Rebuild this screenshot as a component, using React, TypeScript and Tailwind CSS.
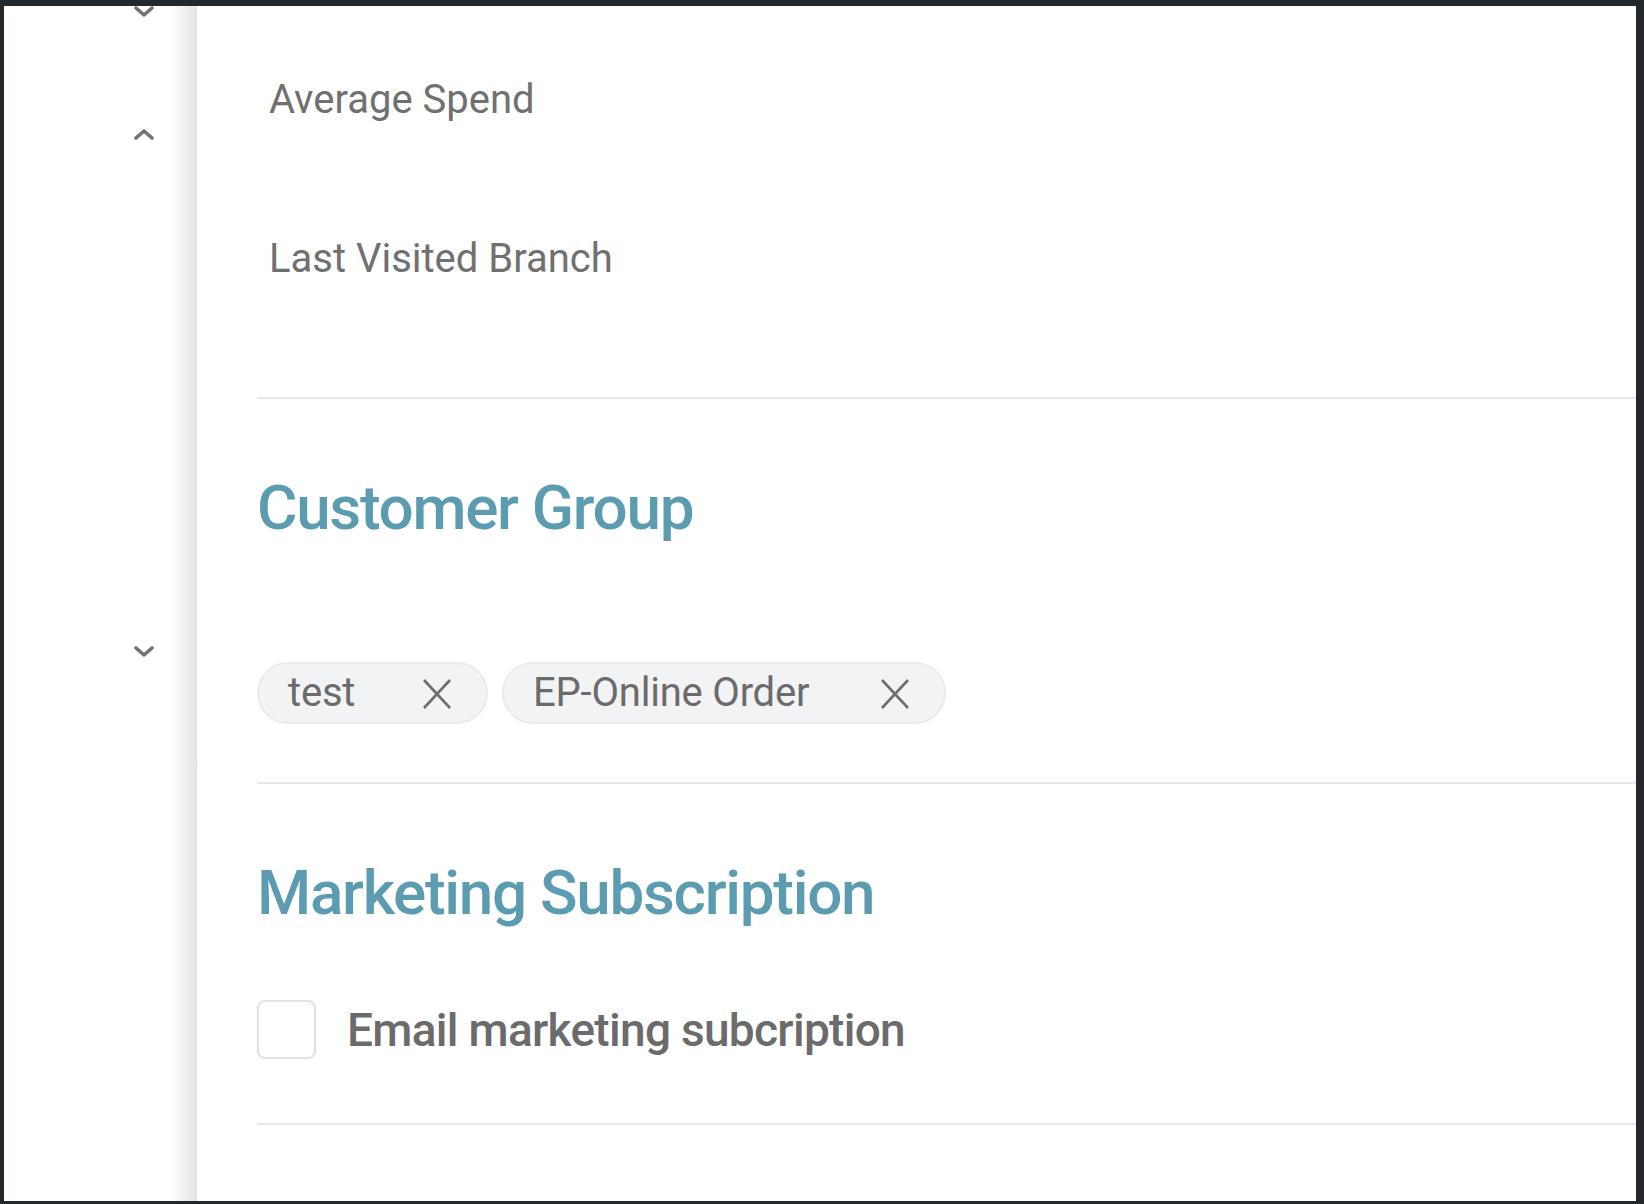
import React from "react";

const font = { fontFamily: "Roboto, 'Noto Sans', sans-serif" };

function Chevron({ up = false }: { up?: boolean }) {
  return (
    <svg width="22" height="12" viewBox="0 0 22 12" fill="none" className="block">
      <polyline
        points={up ? "3,10 11,3 19,10" : "3,2 11,9 19,2"}
        stroke="#737373"
        strokeWidth="3.6"
        strokeLinecap="round"
        strokeLinejoin="round"
      />
    </svg>
  );
}

function XIcon() {
  return (
    <svg width="30" height="32" viewBox="0 0 30 32" fill="none" className="block">
      <path d="M2 2 L28 30 M28 2 L2 30" stroke="#6e6e6e" strokeWidth="2.6" />
    </svg>
  );
}

function Chip({ label, w }: { label: string; w: string }) {
  return (
    <div
      className={`flex items-center h-[62px] rounded-full bg-[#f2f3f5] border-2 border-[#ebebeb] pl-[29px] ${w}`}
    >
      <span className="text-[40px] leading-none text-[#6b6b6b] tracking-[-0.2px]">{label}</span>
      <span className="ml-auto mr-[34px] mt-[2px]">
        <XIcon />
      </span>
    </div>
  );
}

export default function App() {
  return (
    <div
      className="w-[1644px] h-[1204px] bg-[#24272b] pt-[6px] pl-[4px] pr-[8px] pb-[3px] overflow-hidden"
      style={font}
    >
      <div className="flex h-full bg-white overflow-hidden">
        {/* left column */}
        <div className="relative w-[193px] shrink-0 bg-gradient-to-r from-white from-[86%] to-[#e3e3e3] flex flex-col items-center pl-[86px]">
          <div className="mt-[0px]">
            <Chevron />
          </div>
          <div className="mt-[110px]">
            <Chevron up />
          </div>
          <div className="mt-[506px]">
            <Chevron />
          </div>
        </div>

        {/* main */}
        <div className="flex-1 pl-[60px] flex flex-col">
          <div className="pl-[12px] pt-[64px] text-[40px] leading-none text-[#707070]">
            <div className="h-[60px] flex items-center">Average Spend</div>
            <div className="h-[60px] flex items-center mt-[99px]">Last Visited Branch</div>
          </div>
          <div className="mt-[108px] border-t-2 border-[#e8e8e8]" />

          <div className="h-[212px] flex items-center pt-[6px]">
            <h2 className="text-[62px] leading-none font-medium text-[#5c9cb0] tracking-[-1.3px]">
              Customer Group
            </h2>
          </div>
          <div className="mt-[51px] flex gap-[14px]">
            <Chip label="test" w="w-[231px]" />
            <Chip label="EP-Online Order" w="w-[444px]" />
          </div>
          <div className="mt-[58px] border-t-2 border-[#e8e8e8]" />

          <div className="h-[212px] flex items-center pt-[6px]">
            <h2 className="text-[62px] leading-none font-medium text-[#5c9cb0] tracking-[-1.3px]">
              Marketing Subscription
            </h2>
          </div>
          <div className="mt-[4px] flex items-center">
            <div className="w-[59px] h-[59px] rounded-[8px] border-2 border-[#e2e2e2] bg-white" />
            <span className="ml-[31px] text-[46px] leading-none font-medium text-[#6b6b6b] tracking-[-0.7px]">
              Email marketing subcription
            </span>
          </div>
          <div className="mt-[64px] border-t-2 border-[#e8e8e8]" />
        </div>
      </div>
    </div>
  );
}
